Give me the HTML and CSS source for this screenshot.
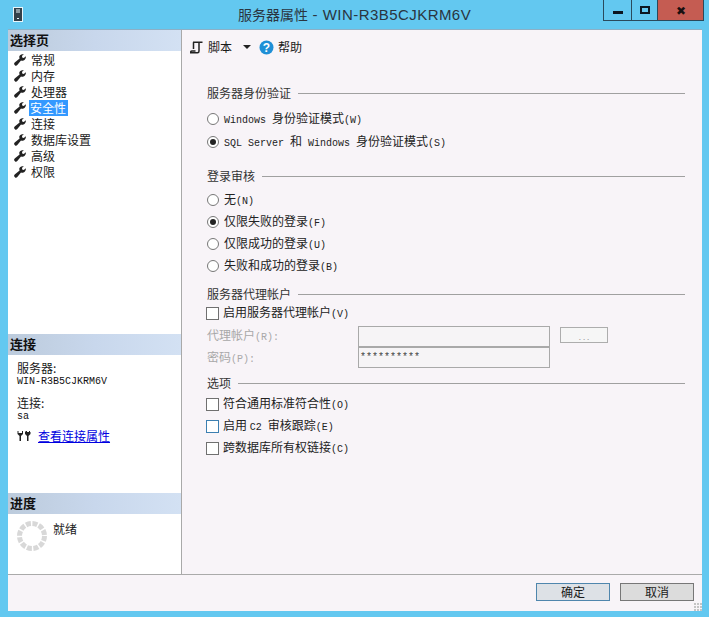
FILE: index.html
```html
<!DOCTYPE html>
<html lang="zh">
<head>
<meta charset="utf-8">
<title>服务器属性</title>
<link rel="stylesheet" href="styles.css">
</head>
<body>
<svg class="defs" width="0" height="0">
  <symbol id="wrench" viewBox="0 0 12 12">
    <path d="M11.800 2.200 9.800 4 8.200 3.400 8 1.800 9.800.4C7.800-.3 5.600.6 5.300 2.600 5.200 3.400 5.400 4 5.600 4.500L.7 8.400C0 9.100-.2 10 .5 10.800L1.100 11.400C1.800 12 2.700 11.700 3.300 11L7 6.500C7.800 6.800 8.700 6.800 9.500 6.500 11.200 5.800 12.200 4 11.800 2.200Z" fill="#222"/>
  </symbol>
</svg>
<div class="window">
  <header class="titlebar">
    <svg class="app-icon" width="10" height="15" viewBox="0 0 10 15"><rect x=".5" y=".5" width="9" height="14" fill="#33404a" stroke="#e8f6fb"/><path d="M3 3h4M3 5h4" stroke="#e8f6fb"/><rect x="4" y="11" width="2" height="1" fill="#e8f6fb"/></svg>
    <div class="title">服务器属性<span class="title-lat"> - WIN-R3B5CJKRM6V</span></div>
    <div class="controls">
      <div class="ctl ctl-min"><span class="glyph-min"></span></div>
      <div class="ctl ctl-max"><span class="glyph-max"></span></div>
      <div class="ctl ctl-close">✖</div>
    </div>
  </header>
  <div class="client">
    <div class="columns">
      <aside class="side">
        <section class="side-pages">
          <h2 class="side-head">选择页</h2>
          <ul class="pages">
            <li class="page"><svg class="wrench"><use href="#wrench"/></svg><span class="page-label">常规</span></li>
            <li class="page"><svg class="wrench"><use href="#wrench"/></svg><span class="page-label">内存</span></li>
            <li class="page"><svg class="wrench"><use href="#wrench"/></svg><span class="page-label">处理器</span></li>
            <li class="page"><svg class="wrench"><use href="#wrench"/></svg><span class="page-label selected">安全性</span></li>
            <li class="page"><svg class="wrench"><use href="#wrench"/></svg><span class="page-label">连接</span></li>
            <li class="page"><svg class="wrench"><use href="#wrench"/></svg><span class="page-label">数据库设置</span></li>
            <li class="page"><svg class="wrench"><use href="#wrench"/></svg><span class="page-label">高级</span></li>
            <li class="page"><svg class="wrench"><use href="#wrench"/></svg><span class="page-label">权限</span></li>
          </ul>
        </section>
        <section class="side-conn">
          <h2 class="side-head">连接</h2>
          <div class="conn-body">
            <div class="conn-label">服务器:</div>
            <div class="conn-value">WIN-R3B5CJKRM6V</div>
            <div class="conn-label conn-gap">连接:</div>
            <div class="conn-value">sa</div>
            <div class="conn-link-row">
              <svg width="15" height="12" viewBox="0 0 15 12"><path d="M.5 1v3L2.500 6v5h1.500V6L6 4V1H5v2H1.500V1ZM8.500 1v1H8v2l2 2v5h1.500V6l2-2V2h-.5V1h-1v1h-2V1Z" fill="#222"/></svg>
              <a class="conn-link" href="#">查看连接属性</a>
            </div>
          </div>
        </section>
        <section class="side-progress">
          <h2 class="side-head">进度</h2>
          <div class="progress-body">
            <svg width="32" height="32" viewBox="0 0 32 32"><circle cx="16" cy="16" r="12.500" fill="none" stroke="#d8d8d8" stroke-width="5" stroke-dasharray="5 1.550"/></svg>
            <span class="progress-text">就绪</span>
          </div>
        </section>
      </aside>
      <main class="main">
        <div class="toolbar">
          <svg width="13" height="13" viewBox="0 0 13 13"><path d="M3 1.200h9.500M3.500 1.200V8M9 1.200V10c0 1-.5 1.800-1.500 1.800H.5c0-1 .5-1.800 1.500-1.800h3.500" fill="none" stroke="#222" stroke-width="1.500"/></svg>
          <span class="tool-label">脚本</span>
          <span class="caret"></span>
          <svg class="help-icon" width="15" height="15" viewBox="0 0 15 15"><circle cx="7.500" cy="7.500" r="7" fill="#1f8fd6"/><text x="7.500" y="11.500" class="help-mark" text-anchor="middle">?</text></svg>
          <span class="tool-label">帮助</span>
        </div>
        <div class="form">
          <div class="head head-auth"><span>服务器身份验证</span><i class="rule"></i></div>
          <label class="row row-first"><span class="radio"></span><span class="txt"><span class="lat">Windows </span>身份验证模式<span class="lat">(W)</span></span></label>
          <label class="row row-second"><span class="radio on"></span><span class="txt"><span class="lat">SQL Server </span>和<span class="lat"> Windows </span>身份验证模式<span class="lat">(S)</span></span></label>

          <div class="head head-audit"><span>登录审核</span><i class="rule"></i></div>
          <label class="row row-audit"><span class="radio"></span><span class="txt">无<span class="lat">(N)</span></span></label>
          <label class="row"><span class="radio on"></span><span class="txt">仅限失败的登录<span class="lat">(F)</span></span></label>
          <label class="row"><span class="radio"></span><span class="txt">仅限成功的登录<span class="lat">(U)</span></span></label>
          <label class="row"><span class="radio"></span><span class="txt">失败和成功的登录<span class="lat">(B)</span></span></label>

          <div class="head head-proxy"><span>服务器代理帐户</span><i class="rule"></i></div>
          <label class="row"><span class="check"></span><span class="txt">启用服务器代理帐户<span class="lat">(V)</span></span></label>
          <div class="fields">
            <div class="field field-first">
              <span class="field-label">代理帐户<span class="lat">(R):</span></span>
              <span class="input"></span>
              <span class="browse">. . .</span>
            </div>
            <div class="field">
              <span class="field-label field-label-pass">密码<span class="lat">(P):</span></span>
              <span class="input input-pass">**********</span>
            </div>
          </div>

          <div class="head head-opts"><span>选项</span><i class="rule"></i></div>
          <label class="row row-opts"><span class="check"></span><span class="txt">符合通用标准符合性<span class="lat">(O)</span></span></label>
          <label class="row"><span class="check focus"></span><span class="txt">启用 <span class="lat">C2 </span>审核跟踪<span class="lat">(E)</span></span></label>
          <label class="row"><span class="check"></span><span class="txt">跨数据库所有权链接<span class="lat">(C)</span></span></label>
        </div>
      </main>
    </div>
    <footer class="footer">
      <button class="btn btn-default">确定</button>
      <button class="btn">取消</button>
      <span class="grip"></span>
    </footer>
  </div>
</div>
</body>
</html>
```
FILE: styles.css
```css
* { box-sizing: border-box; }
html, body { margin: 0; padding: 0; }
body {
  width: 709px;
  height: 617px;
  overflow: hidden;
  font-family: "Noto Sans CJK SC", "Liberation Sans", sans-serif;
  font-size: 12px;
  color: #1a1a1a;
  background: #63c8f0;
}
.defs { position: absolute; }
.window { width: 709px; height: 617px; display: flex; flex-direction: column; padding: 0 7px 6px 8px; }
.titlebar { height: 30px; flex: none; position: relative; display: flex; align-items: flex-start; border-bottom: 1px solid #8cb0c6; }
.app-icon { margin: 7px 0 0 5px; }
.title {
  position: absolute;
  left: 230px;
  top: 4px;
  font-size: 14px;
  line-height: 20px;
  color: #2a3540;
  white-space: pre;
}
.title-lat { font-family: "Liberation Sans", sans-serif; font-size: 15px; letter-spacing: 0.45px; }
.controls { position: absolute; left: 596px; top: 0; display: flex; height: 21px; }
.ctl { height: 21px; border: 1px solid #2a4a5c; border-top: 0; display: flex; align-items: center; justify-content: center; margin-left: -1px; }
.ctl-min { width: 29px; }
.ctl-max { width: 27px; }
.ctl-close { width: 47px; background: #c55c52; font-size: 12px; color: #1a1010; line-height: 1; }
.glyph-min { width: 10px; height: 3px; background: #0c1620; margin-top: 5px; }
.glyph-max { width: 10px; height: 8px; border: 2px solid #0c1620; margin-top: -1px; }

.client { flex: 1; display: flex; flex-direction: column; background: #f8f4f8; min-height: 0; }
.columns { flex: 1; display: flex; min-height: 0; }
.side { width: 174px; flex: none; background: #fff; border-right: 1px solid #a9a9a9; display: flex; flex-direction: column; }
.side-head {
  margin: 0;
  height: 21px;
  padding-left: 2px;
  font-size: 13px;
  line-height: 20px;
  font-weight: 700;
  color: #111;
  background: linear-gradient(90deg, #bccbdc 0%, #c8d7ec 50%, #d3e1f3 100%);
}
.side-pages { height: 304px; }
.pages { list-style: none; margin: 0; padding: 1px 0 0; }
.page { height: 16px; display: flex; align-items: center; }
.wrench { width: 12px; height: 12px; margin-left: 6px; flex: none; }
.page-label { margin-left: 4px; padding: 0 1px; line-height: 16px; height: 16px; color: #1a1a1a; }
.page-label.selected { background: #3399ff; color: #fff; margin-left: 3px; padding: 0 2px 0 1px;}
.side-conn { height: 159px; }
.conn-body { padding: 6px 0 0 9px; }
.conn-label { line-height: 14px; height: 14px; }
.conn-value { font-family: "Liberation Mono", monospace; font-size: 10px; line-height: 10px; height: 10px; margin-top: 2px; color: #111; }
.conn-gap { margin-top: 9px; }
.conn-link-row { display: flex; align-items: center; margin-top: 6px; }
.conn-link { margin-left: 6px; color: #0000e0; text-decoration: underline; line-height: 16px; }
.side-progress { flex: 1; }
.progress-body { position: relative; padding: 6px 0 0 8px; display: flex; align-items: flex-start; }
.progress-text { margin-left: 5px; margin-top: 1px; line-height: 16px; }

.main { flex: 1; min-width: 0; }
.toolbar { height: 31px; display: flex; align-items: center; padding: 3px 0 0 8px; }
.tool-label { margin-left: 5px; line-height: 16px; }
.caret { width: 0; height: 0; border: 4px solid transparent; border-top: 4px solid #222; border-bottom: 0; margin-left: 11px; }
.help-icon { margin-left: 8px; }
.help-icon + .tool-label { margin-left: 4px; }
.help-mark { font: 700 12px "Liberation Sans", sans-serif; fill: #fff; }
.form { padding: 24px 17px 0 25px; }
.head { height: 16px; display: flex; align-items: center; line-height: 16px; color: #333; }
.rule { flex: 1; height: 1px; background: #a0a0a0; margin-left: 7px; }
.head-audit { margin-top: 15px; }
.head-proxy { margin-top: 9px; }
.head-opts { margin-top: 7px; }
.row { height: 22px; display: flex; align-items: center; }
.row-first { margin-top: 7px; }
.row-second { margin-top: 1px; }
.row-audit { margin-top: 5px; }
.row-opts { margin-top: 2px; }
.radio { width: 12px; height: 12px; border-radius: 50%; border: 1px solid #777; background: #fff; margin-right: 5px; flex: none; position: relative; }
.radio.on::after { content: ""; position: absolute; left: 2px; top: 2px; width: 6px; height: 6px; border-radius: 50%; background: #222; }
.check { width: 13px; height: 13px; border: 1px solid #707070; background: #fff; margin-right: 4px; margin-left: -1px; flex: none; }
.check.focus { border-color: #3c7fb1; }
.txt { color: #222; line-height: 16px; white-space: pre; }
.lat { font-family: "Liberation Mono", monospace; font-size: 10px; white-space: pre; }
.fields { margin-top: 2px; }
.field { display: flex; align-items: flex-start; height: 21px; color: #a8a8a8; }
.field-label { width: 151px; flex: none; line-height: 18px; }
.field-label-pass { line-height: 20px; }
.input { width: 192px; height: 21px; border: 1px solid #a9a9a9; background: #f6f4f6; font-family: "Liberation Mono", monospace; font-size: 10px; line-height: 19px; color: #444; padding-left: 1px; letter-spacing: 0; }
.browse { width: 48px; height: 16px; border: 1px solid #adadad; background: #f6f6f6; margin: 1px 0 0 10px; font-size: 8px; line-height: 17px; text-align: center; color: #999; }
.footer { height: 37px; flex: none; border-top: 1px solid #aaa; display: flex; align-items: flex-start; justify-content: flex-end; padding: 8px 8px 0 0; gap: 10px; position: relative; }
.btn { width: 74px; height: 18px; padding: 0; font: 12px/16px "Noto Sans CJK SC", sans-serif; color: #1a1a1a; background: #dcdcdc; border: 1px solid #777; }
.btn-default { background: #dde1e6; border-color: #4f86ad; }
.grip { position: absolute; right: 0; bottom: 0; width: 8px; height: 8px; background: radial-gradient(circle at 1px 1px, #c4c4c4 1px, transparent 1px) 0 0 / 3px 3px; }
```
